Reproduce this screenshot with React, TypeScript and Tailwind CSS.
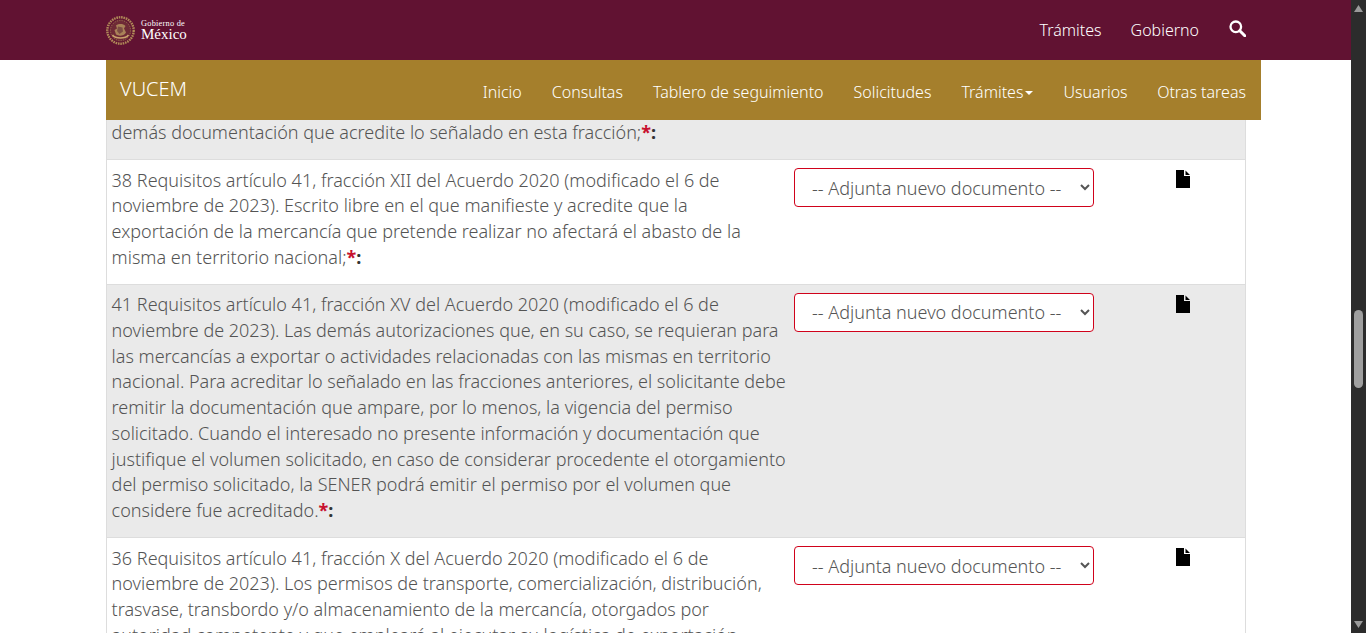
const font = "[font-family:'Noto_Sans','Open_Sans',sans-serif]";

function FileIcon() {
  return (
    <svg width="14" height="18" viewBox="0 0 14 18" className="block">
      <path d="M0 0H8V6H14V18H0Z M9.5 0.5L14 5H9.5Z" fill="#000" />
    </svg>
  );
}

function Row({ text, grey, suffix = true }: { text: string; grey?: boolean; suffix?: boolean }) {
  return (
    <div className={`grid grid-cols-[683px_330px_1fr] border-t border-[#dddddd] ${grey ? "bg-[#eaeaea]" : "bg-white"}`}>
      <div className="pl-[4.6px] pr-[2.4px] pt-[7.56px] pb-[13.44px]">
        {text}
        {suffix && (
          <>
            <span className="font-bold text-[#c8102e]">*</span>
            <span className="font-bold text-[#333]">:</span>
          </>
        )}
      </div>
      <div className="pl-[4px] pt-2">
        <select className="w-[300px] h-[39px] border border-[#d0021b] rounded-[4px] bg-white text-[#555] text-[18px] pl-[13px] pr-3 font-light">
          <option>-- Adjunta nuevo documento --</option>
        </select>
      </div>
      <div className="flex justify-center pt-[10px]">
        <FileIcon />
      </div>
    </div>
  );
}

function Emblem() {
  return (
    <svg width="29" height="29" viewBox="0 0 29 29">
      <circle cx="14.5" cy="14.5" r="13.2" fill="none" stroke="#b08a58" strokeWidth="2.4" strokeDasharray="1.6 0.8" />
      <circle cx="14.5" cy="14.5" r="11" fill="#6e2a36" />
      <circle cx="14.5" cy="14.5" r="10" fill="none" stroke="#9a7350" strokeWidth="1" strokeDasharray="1 1.4" />
      <path d="M10 9.5c3-2 7-2 9.5 0.5l-1.5 2.5 2 4c-2 3.5-7 4-10 2l-1.5-4.5 2.5-1.500z" fill="#a98258" />
      <path d="M6.500 19c3 4 13 4 16 0" fill="none" stroke="#c9a26c" strokeWidth="1.600" />
      <path d="M12 10.500l4.500 1 0.500 4-3.500 2.500-2.500-3z" fill="#7c4c44" />
    </svg>
  );
}

export default function App() {
  return (
    <div className={`flex h-screen w-full overflow-hidden bg-white ${font}`}>
      <div className="flex-1 min-w-0 flex flex-col overflow-hidden">
        <header className="h-[60px] shrink-0 bg-[#611232] flex items-center justify-between pl-[106px] pr-[105px] text-white">
          <div className="flex items-center gap-[6px]">
            <Emblem />
            <div className="[font-family:'Liberation_Serif',serif] text-white -mt-[1px]">
              <div className="text-[8.3px] leading-[8px] tracking-[0.25px]">Gobierno de</div>
              <div className="text-[15px] leading-[12px]">México</div>
            </div>
          </div>
          <nav className="flex items-center text-[16px] font-light">
            <span className="w-[62px] ml-[1px] -mr-[1px]">Trámites</span>
            <span className="ml-[30px]">Gobierno</span>
            <svg width="17" height="17" viewBox="0 0 17 17" fill="none" stroke="#fff" className="block ml-[30px] -mt-[3px]">
              <circle cx="6.8" cy="6.800" r="5.300" strokeWidth="2.300" />
              <path d="M10.800 10.800L15.800 15.800" strokeWidth="3" strokeLinecap="round" />
            </svg>
          </nav>
        </header>

        <div className="w-[1155px] h-[60px] shrink-0 ml-[106px] bg-[#a57f2c] flex items-center justify-between pl-[14px] pr-[15px] text-white">
          <span className="text-[20px] font-light -mt-[2px]">VUCEM</span>
          <nav className="flex items-center gap-[30px] text-[16px] font-light mt-[3px]">
            <span>Inicio</span>
            <span>Consultas</span>
            <span>Tablero de seguimiento</span>
            <span>Solicitudes</span>
            <span className="flex items-center">
              Trámites
              <span className="ml-[2px] mt-[2px] border-x-[4px] border-x-transparent border-t-[4px] border-t-white" />
            </span>
            <span>Usuarios</span>
            <span className="-ml-[0.5px]">Otras tareas</span>
          </nav>
        </div>

        <main className="w-[1140px] ml-[106px] border-x border-[#dddddd] text-[18px] leading-[25.71px] font-light text-[#545454]">
          <div className="h-[39px] bg-[#eaeaea] pl-[4.6px]">
            demás documentación que acredite lo señalado en esta fracción;
            <span className="font-bold text-[#c8102e]">*</span>
            <span className="font-bold text-[#333]">:</span>
          </div>
          <Row text="38 Requisitos artículo 41, fracción XII del Acuerdo 2020 (modificado el 6 de noviembre de 2023). Escrito libre en el que manifieste y acredite que la exportación de la mercancía que pretende realizar no afectará el abasto de la misma en territorio nacional;" />
          <Row
            grey
            text="41 Requisitos artículo 41, fracción XV del Acuerdo 2020 (modificado el 6 de noviembre de 2023). Las demás autorizaciones que, en su caso, se requieran para las mercancías a exportar o actividades relacionadas con las mismas en territorio nacional. Para acreditar lo señalado en las fracciones anteriores, el solicitante debe remitir la documentación que ampare, por lo menos, la vigencia del permiso solicitado. Cuando el interesado no presente información y documentación que justifique el volumen solicitado, en caso de considerar procedente el otorgamiento del permiso solicitado, la SENER podrá emitir el permiso por el volumen que considere fue acreditado."
          />
          <Row
            suffix={false}
            text="36 Requisitos artículo 41, fracción X del Acuerdo 2020 (modificado el 6 de noviembre de 2023). Los permisos de transporte, comercialización, distribución, trasvase, transbordo y/o almacenamiento de la mercancía, otorgados por autoridad competente y que empleará al ejecutar su logística de exportación"
          />
        </main>
      </div>

      <aside className="w-[15px] shrink-0 h-full bg-[#2c2c2c] flex flex-col items-center justify-between py-[5px]">
        <svg width="9" height="7" viewBox="0 0 9 7"><path d="M4.500 0L9 7H0Z" fill="#9a9a9a" /></svg>
        <svg width="9" height="7" viewBox="0 0 9 7"><path d="M0 0H9L4.500 7Z" fill="#9a9a9a" /></svg>
      </aside>
      <div className="absolute left-[1354px] top-[310px] w-[9px] h-[78px] rounded-full bg-[#9f9f9f]" />
    </div>
  );
}
